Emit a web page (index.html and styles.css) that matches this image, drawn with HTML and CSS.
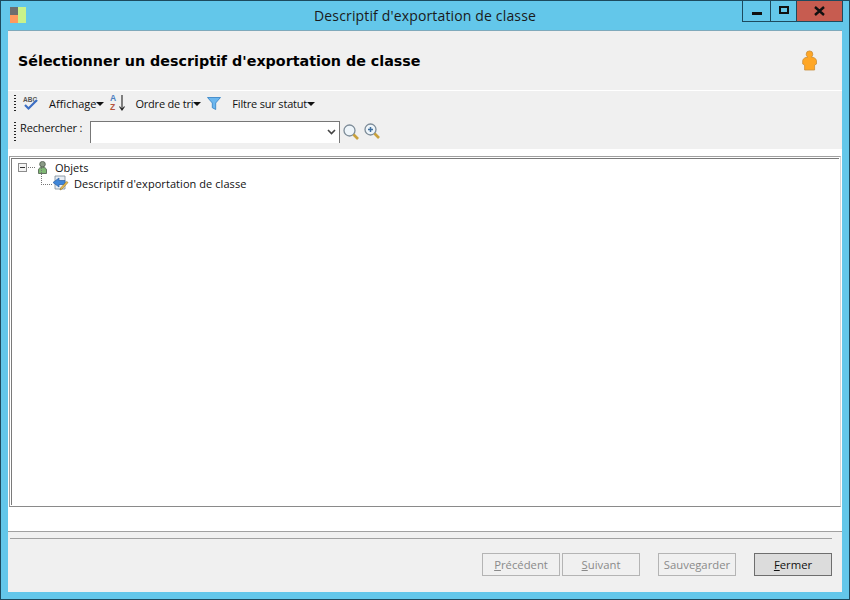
FILE: index.html
```html
<!DOCTYPE html>
<html lang="fr">
<head>
<meta charset="utf-8">
<title>Descriptif d'exportation de classe</title>
<link rel="stylesheet" href="styles.css">
</head>
<body>
<div class="window">
  <div class="titlebar">
    <svg class="app-icon" width="16" height="16" viewBox="0 0 16 16"><rect x="0" y="0" width="8" height="8" fill="#6e6e6e"/><rect x="0" y="8" width="8" height="8" fill="#ff9a5e"/><rect x="8" y="0" width="8" height="16" fill="#c9f28a"/></svg>
    <div class="title">Descriptif d'exportation de classe</div>
    <div class="controls">
      <div class="ctl ctl-min"><span class="min-glyph"></span></div>
      <div class="ctl ctl-max"><span class="max-glyph"></span></div>
      <div class="ctl ctl-close"><svg width="11" height="10" viewBox="0 0 11 10"><path d="M1 1 L10 9 M10 1 L1 9" stroke="#111" stroke-width="2.4"/></svg></div>
    </div>
  </div>
  <div class="client">
    <div class="header">
      <h1 class="heading">Sélectionner un descriptif d'exportation de classe</h1>
      <svg class="user-icon" width="15" height="21" viewBox="0 0 15 21"><path d="M4.200 4.200a3.300 3.300 0 1 1 6.600 0c0 1.300-.6 2.300-1.500 2.900c2.500.3 4.800 1.300 5.200 3.400v3.500l-1.900 1v5h-10v-5l-1.900-1v-3.500c.4-2.100 2.700-3.100 5.200-3.400c-.9-.6-1.700-1.600-1.700-2.900z" fill="#ffa726" stroke="#c98f3c" stroke-width=".8"/></svg>
    </div>
    <div class="toolbar">
      <div class="tool-row row-one">
        <span class="grip"></span>
        <svg class="ic-abc" width="18" height="15" viewBox="0 0 18 15"><text x="1" y="5.500" class="abc-text">ABC</text><path d="M3 9l3.500 3.500L15 4" fill="none" stroke="#3d6fc4" stroke-width="2.200"/></svg>
        <span class="tool-label lbl-aff">Affichage</span><span class="caret"></span>
        <svg class="ic-sort" width="18" height="17" viewBox="0 0 18 17"><text x="1" y="7" class="az-a">A</text><text x="1" y="16" class="az-z">Z</text><path d="M13 1v14M10.500 12.500l2.500 3.500 2.500-3.500" fill="none" stroke="#222" stroke-width="1.100"/></svg>
        <span class="tool-label lbl-tri">Ordre de tri</span><span class="caret"></span>
        <svg class="ic-filter" width="14" height="13" viewBox="0 0 14 13"><path d="M.5 .500h13l-4.800 5.500v6.500l-3.400-1.800v-4.700z" fill="#6db7ee" stroke="#2f7fc4" stroke-width=".8"/></svg>
        <span class="tool-label lbl-filtre">Filtre sur statut</span><span class="caret"></span>
      </div>
      <div class="tool-row row-two">
        <span class="grip grip-two"></span>
        <span class="tool-label lbl-search">Rechercher :</span>
        <div class="combo"><svg class="chev" width="9" height="6" viewBox="0 0 9 6"><path d="M1 1l3.500 3.500L8 1" fill="none" stroke="#444" stroke-width="1.600"/></svg></div>
        <svg class="ic-mag" width="16" height="16" viewBox="0 0 16 16"><circle cx="6.500" cy="6.500" r="5.500" fill="#eef5fa" stroke="#7d8c98" stroke-width="1.300"/><path d="M10.500 10.500l4.500 4.500" stroke="#c9a13c" stroke-width="2.600"/></svg>
        <svg class="ic-magplus" width="16" height="17" viewBox="0 0 16 17"><circle cx="6.500" cy="6.500" r="5.500" fill="#eef5fa" stroke="#7d8c98" stroke-width="1.300"/><path d="M10.500 10.500l4.500 4.500" stroke="#c9a13c" stroke-width="2.600"/><path d="M4 6.500h5M6.500 4v5" stroke="#3f6f9e" stroke-width="1.500"/></svg>
      </div>
    </div>
    <div class="tree-wrap">
      <div class="tree">
        <div class="node node-root">
          <span class="expander"><span class="minus"></span></span><span class="dots-h"></span>
          <svg class="ic-obj" width="11" height="13" viewBox="0 0 11 13"><circle cx="5.500" cy="3.200" r="2.800" fill="#8a9a86" stroke="#4d5a4b" stroke-width=".8"/><path d="M1.500 12.500v-3.500c0-1.800 1.800-2.700 4-2.700s4 .9 4 2.700v3.500z" fill="#7fb874" stroke="#4d5a4b" stroke-width=".8"/></svg>
          <span class="node-text">Objets</span>
        </div>
        <div class="node node-child">
          <span class="elbow"></span>
          <svg class="ic-desc" width="17" height="16" viewBox="0 0 17 16"><path d="M3 1h10v13H3z" fill="#e8eef5" stroke="#7a8896" stroke-width=".8"/><path d="M7 3v2.500h6v4H7V12L1 7.500z" fill="#3f86d8" stroke="#2a5fa5" stroke-width=".7"/><path d="M16 7.500l-6 6.500-2 1 .6-2 6-6.500z" fill="#f2c14e" stroke="#8a6b25" stroke-width=".6"/></svg>
          <span class="node-text">Descriptif d'exportation de classe</span>
        </div>
      </div>
    </div>
    <div class="status-strip"></div>
    <div class="footer">
      <div class="btn-row">
        <button class="btn btn-off btn-prev"><u>P</u>récédent</button>
        <button class="btn btn-off btn-next"><u>S</u>uivant</button>
        <button class="btn btn-off btn-save">Sauvegarder</button>
        <button class="btn btn-close"><u>F</u>ermer</button>
      </div>
    </div>
  </div>
</div>
</body>
</html>
```

FILE: styles.css
```css
* { box-sizing: border-box; }
html, body { margin: 0; padding: 0; background: #63c7ea; }
body { width: 850px; height: 600px; overflow: hidden; font-family: "Open Sans", "Noto Sans", sans-serif; }
.window {
  width: 850px; height: 600px; background: #63c7ea;
  border: 1px solid #1d4a5e; display: flex; flex-direction: column;
}
.titlebar { height: 29px; flex: none; display: flex; align-items: flex-start; position: relative; padding-left: 9px; }
.app-icon { margin-top: 6px; flex: none; }
.title { position: absolute; left: 0; right: 0; top: 5px; text-align: center; font-size: 14px; letter-spacing: .15px; line-height: 19px; color: #1a1a1a; padding-right: 0; }
.controls { margin-left: auto; margin-right: 6px; display: flex; height: 21px; border: 1px solid #1d4a5e; border-top: 0; position: relative; }
.ctl { display: flex; align-items: center; justify-content: center; height: 20px; }
.ctl-min { width: 28px; border-right: 1px solid #1d4a5e; }
.ctl-max { width: 26px; border-right: 1px solid #1d4a5e; }
.ctl-close { width: 45px; background: #c75c50; }
.min-glyph { width: 10px; height: 3px; background: #111; margin-top: 5px; }
.max-glyph { width: 10px; height: 8px; border: 2px solid #111; margin-top: -2px; }
.client { flex: 1; margin: 0 7px 7px 7px; background: #fff; border-top: 1px solid #7fa9bb; display: flex; flex-direction: column; min-height: 0; }
.header { height: 60px; flex: none; background: #f0f0f0; display: flex; align-items: center; padding: 0 25px 0 10px; justify-content: space-between; border-bottom: 1px solid #fff; }
.heading { margin: 0; font-family: "DejaVu Sans", sans-serif; font-size: 14.3px; font-weight: 700; color: #000; }
.user-icon { flex: none; }
.toolbar { height: 58px; flex: none; background: #f0f0f0; padding: 1px 0 0 6px; }
.tool-row { display: flex; align-items: center; }
.row-one { height: 23px; }
.row-two { height: 28px; margin-top: 2px; }
.grip { width: 2px; height: 18px; flex: none; background-image: linear-gradient(#222 50%, transparent 50%); background-size: 2px 3px; }
.grip-two { height: 19px; }
.tool-label { font-size: 11px; color: #111; white-space: nowrap; }
.caret { width: 0; height: 0; border-left: 4px solid transparent; border-right: 4px solid transparent; border-top: 4px solid #111; flex: none; }
.ic-abc { margin-left: 6px; flex: none; }
.lbl-aff { margin-left: 9px; }
.ic-sort { margin-left: 5px; flex: none; position: relative; top: -1px; }
.lbl-tri { margin-left: 8px; letter-spacing: -.2px; }
.ic-filter { margin-left: 6px; flex: none; }
.lbl-filtre { margin-left: 11px; letter-spacing: -.18px; }
.lbl-search { margin-left: 4px; margin-top: -7px; letter-spacing: -.15px; }
.combo { width: 250px; height: 22px; margin-left: 8px; margin-top: 1px; flex: none; background: #fff; border-left: 1px solid #777; border-top: 1px solid #777; border-right: 1px solid #777; display: flex; align-items: center; justify-content: flex-end; padding-right: 3px; }
.ic-mag { margin-left: 3px; margin-top: 1px; flex: none; }
.ic-magplus { margin-left: 5px; flex: none; }
.tree-wrap { background: #fff; padding: 7px 1px 0 1px; height: 359px; flex: none; }
.tree { height: 351px; border: 1px solid #a0a0a0; border-right-color: #d8d8d8; border-bottom-color: #8a8a8a; background: #fff; box-shadow: inset 0 0 0 1px #fff, inset 2px 2px 0 0 #7a7a7a; padding: 2px 0 0 8px; }
.node { display: flex; align-items: center; height: 16px; font-size: 11px; color: #111; position: relative; }
.expander { width: 9px; height: 9px; border: 1px solid #8c8c8c; display: flex; align-items: center; justify-content: center; flex: none; background: #f4f4f4; }
.minus { width: 5px; height: 1px; background: #333; }
.dots-h { width: 7px; border-top: 1px dotted #777; flex: none; margin-left: 1px; }
.ic-obj { margin-left: 2px; flex: none; }
.node-root .node-text { margin-left: 7px; }
.node-child { padding-left: 23px; }
.elbow { width: 11px; height: 17px; border-left: 1px dotted #777; border-bottom: 1px dotted #777; flex: none; margin-top: -14px; }
.ic-desc { flex: none; }
.node-child .node-text { margin-left: 5px; letter-spacing: .06px; }
.status-strip { height: 24px; flex: none; background: #fff; border-bottom: 1px solid #a0a0a0; }
.footer { flex: 1; background: #f0f0f0; padding: 6px 10px 0 1px; }
.btn-row { border-top: 1px solid #a0a0a0; height: 100%; display: flex; align-items: flex-start; padding-top: 14px; margin-left: 1px; justify-content: flex-end; }
.btn { height: 23px; width: 78px; font-family: inherit; font-size: 11.3px; padding: 0; background: #f0f0f0; display: block; }
.btn-off { border: 1px solid #b4b4b4; color: #8a8a8a; }
.btn-next { margin-left: 2px; }
.btn-save { margin-left: 18px; }
.btn-close { margin-left: 18px; border: 1px solid #6e6e6e; background: #dcdcdc; color: #111; }
.abc-text { font-size: 6.5px; font-weight: 700; fill: #555; font-family: "Liberation Sans", sans-serif; }
.az-a { font-size: 8.5px; font-weight: 700; fill: #4a7fc0; font-family: "Liberation Sans", sans-serif; }
.az-z { font-size: 8.5px; font-weight: 700; fill: #b5533c; font-family: "Liberation Sans", sans-serif; }
```
